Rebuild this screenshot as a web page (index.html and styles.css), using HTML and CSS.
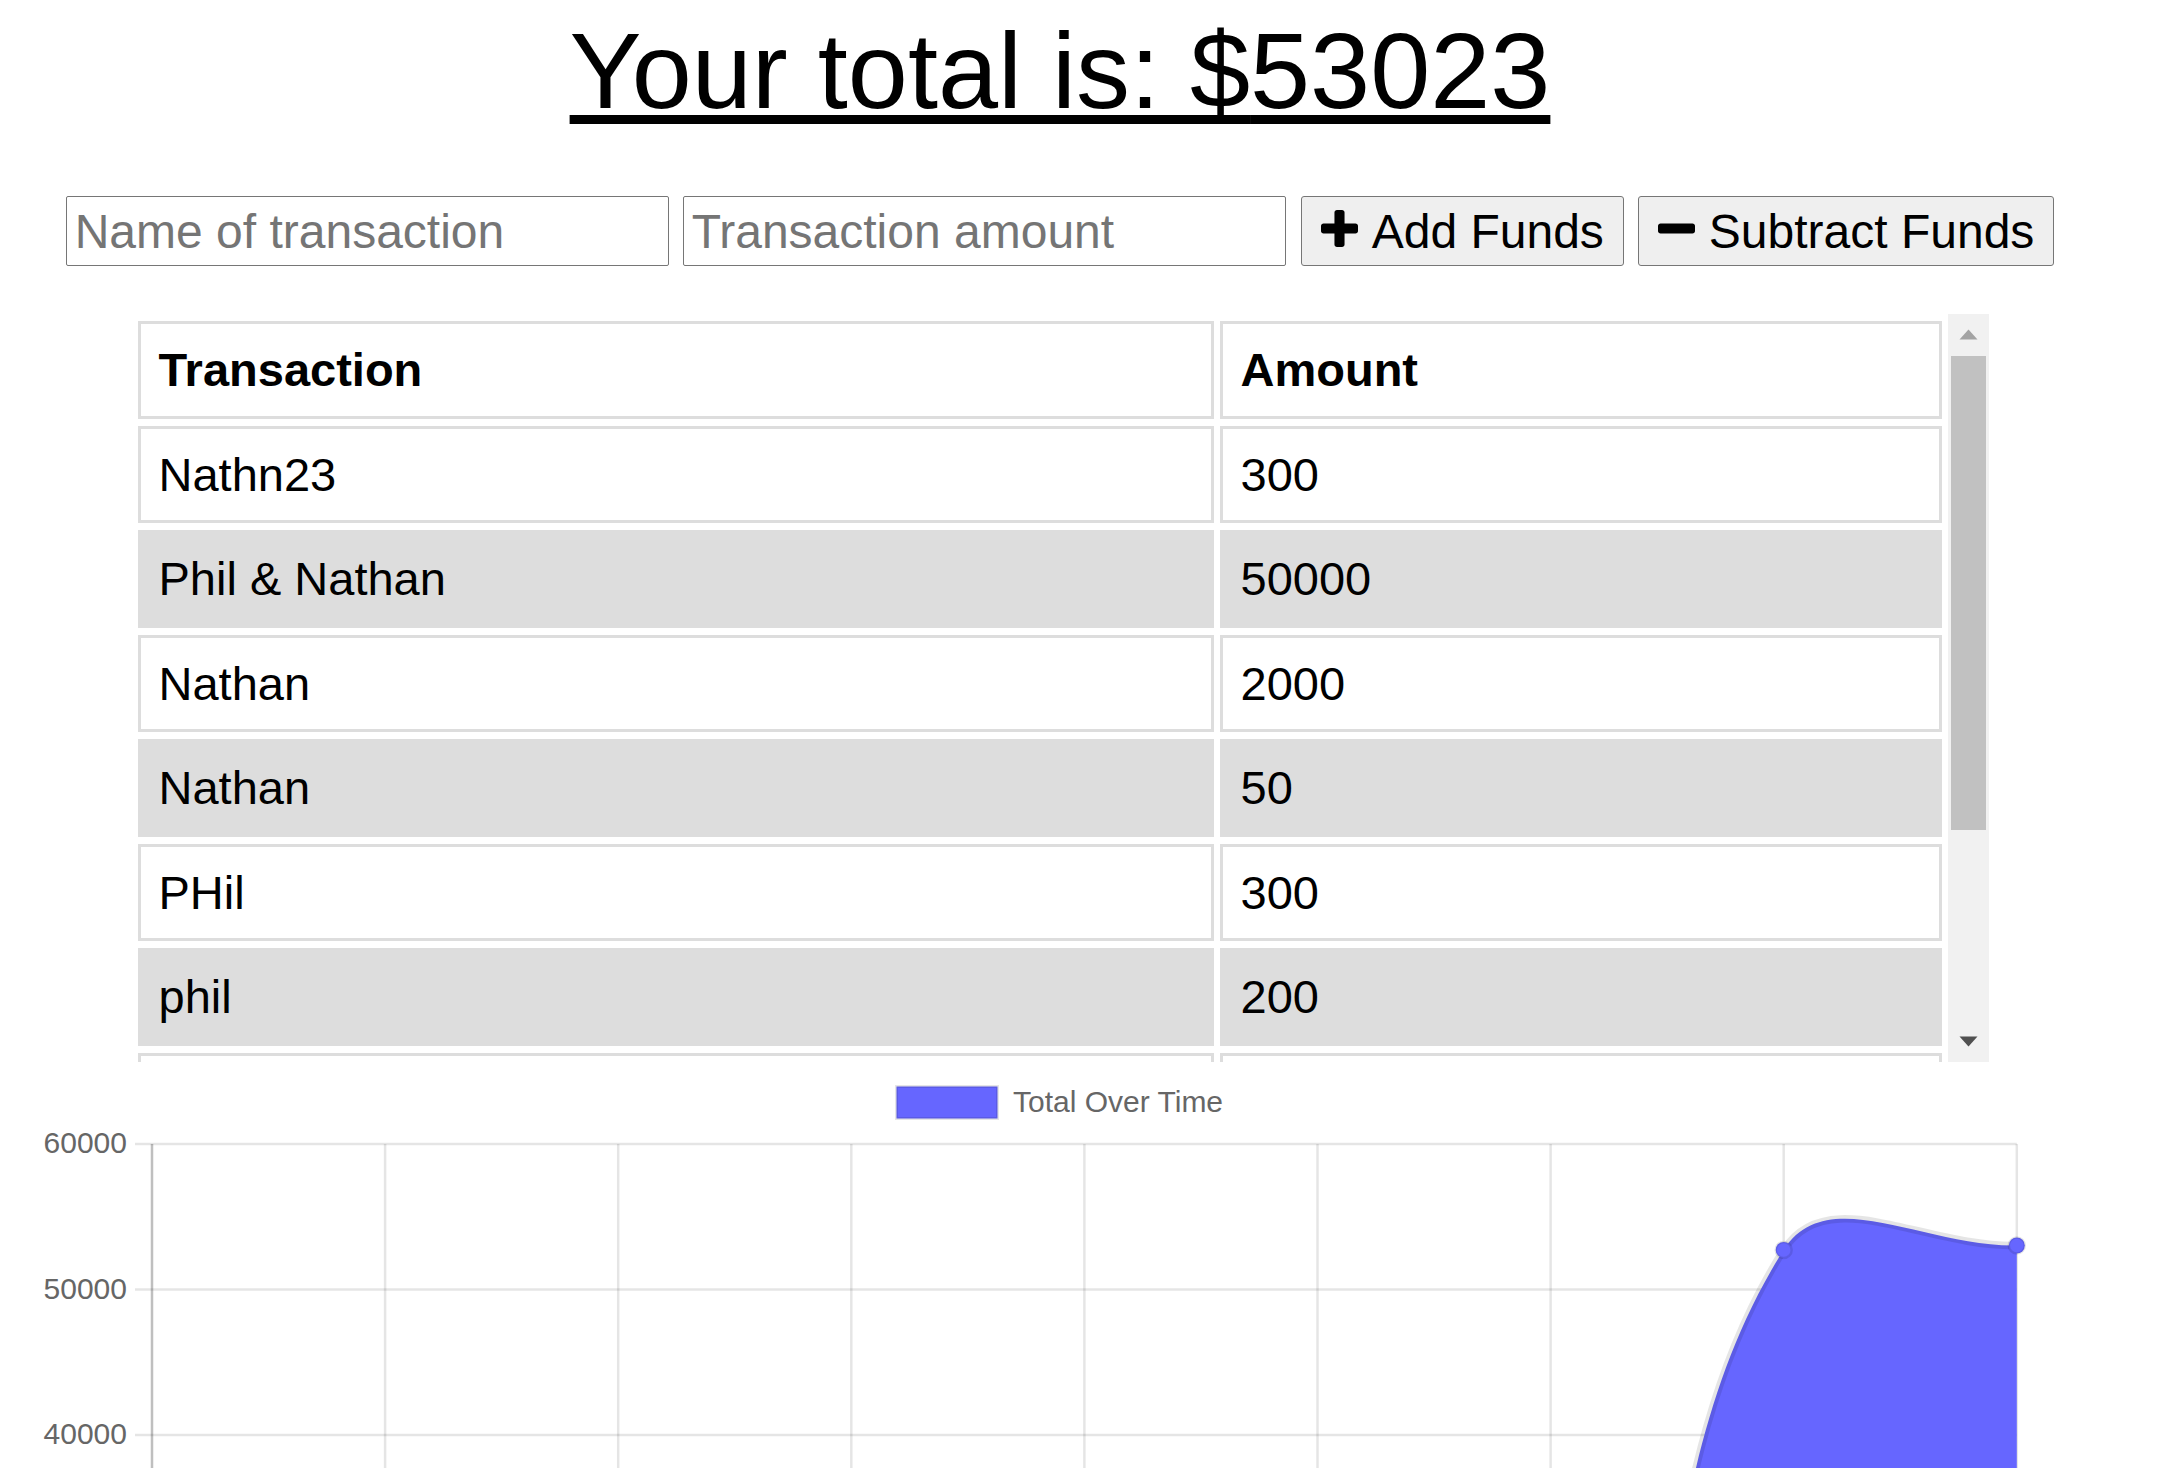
FILE: index.html
```html
<!DOCTYPE html>
<html lang="en">
<head>
<meta charset="utf-8">
<title>Budget Tracker</title>
<link rel="stylesheet" href="styles.css">
</head>
<body>
<main class="page">
  <h1 class="total">Your total is: $<span class="total-amount">53023</span></h1>

  <form class="entry">
    <input class="field" type="text" placeholder="Name of transaction">
    <input class="field" type="number" placeholder="Transaction amount">
    <button class="btn btn-add" type="button">
      <svg class="icon" viewBox="0 192 1408 1408" aria-hidden="true"><path d="M1408 800v192q0 40-28 68t-68 28h-416v416q0 40-28 68t-68 28h-192q-40 0-68-28t-28-68v-416h-416q-40 0-68-28t-28-68v-192q0-40 28-68t68-28h416v-416q0-40 28-68t68-28h192q40 0 68 28t28 68v416h416q40 0 68 28t28 68z"/></svg>Add Funds
    </button>
    <button class="btn btn-sub" type="button">
      <svg class="icon" viewBox="0 192 1408 1408" aria-hidden="true"><path d="M1408 800v192q0 40-28 68t-68 28h-1216q-40 0-68-28t-28-68v-192q0-40 28-68t68-28h1216q40 0 68 28t28 68z"/></svg>Subtract Funds
    </button>
  </form>

  <div class="table-box">
    <div class="table-view">
      <table class="tx-table">
        <colgroup><col class="col-name"><col class="col-amount"></colgroup>
        <thead>
          <tr><th>Transaction</th><th>Amount</th></tr>
        </thead>
        <tbody>
          <tr><td>Nathn23</td><td>300</td></tr>
          <tr><td>Phil &amp; Nathan</td><td>50000</td></tr>
          <tr><td>Nathan</td><td>2000</td></tr>
          <tr><td>Nathan</td><td>50</td></tr>
          <tr><td>PHil</td><td>300</td></tr>
          <tr><td>phil</td><td>200</td></tr>
          <tr><td>Phil</td><td>100</td></tr>
          <tr><td>Nathan</td><td>50</td></tr>
          <tr><td>test</td><td>23</td></tr>
        </tbody>
      </table>
    </div>
    <div class="scrollbar" aria-hidden="true">
      <div class="sb-btn">
        <svg viewBox="0 0 41 42"><polygon points="11.5,25.5 29.5,25.5 20.5,15.5" fill="#a3a3a3"/></svg>
      </div>
      <div class="sb-track"><div class="sb-thumb"></div></div>
      <div class="sb-btn">
        <svg viewBox="0 0 41 42"><polygon points="11.5,16.5 29.5,16.5 20.5,26.5" fill="#505050"/></svg>
      </div>
    </div>
  </div>

  <div class="chart">
    <svg class="chart-svg" viewBox="0 1062 2120 406" width="2120" height="406">
      <!-- legend -->
      <rect x="896.5" y="1086.5" width="101" height="32" fill="#6666ff" stroke="rgba(0,0,0,0.1)" stroke-width="3"/>
      <text class="legend-text" x="1013" y="1112">Total Over Time</text>

      <!-- y axis labels -->
      <text class="axis-text" x="127" y="1153" text-anchor="end">60000</text>
      <text class="axis-text" x="127" y="1299" text-anchor="end">50000</text>
      <text class="axis-text" x="127" y="1444" text-anchor="end">40000</text>

      <!-- horizontal grid -->
      <g stroke="rgba(0,0,0,0.1)" stroke-width="2.5">
        <line x1="135" y1="1144" x2="2016.8" y2="1144"/>
        <line x1="135" y1="1289.5" x2="2016.8" y2="1289.5"/>
        <line x1="135" y1="1435" x2="2016.8" y2="1435"/>
      </g>
      <!-- vertical grid -->
      <g stroke="rgba(0,0,0,0.1)" stroke-width="2.5">
        <line x1="385.1" y1="1144" x2="385.1" y2="1470"/>
        <line x1="618.2" y1="1144" x2="618.2" y2="1470"/>
        <line x1="851.3" y1="1144" x2="851.3" y2="1470"/>
        <line x1="1084.4" y1="1144" x2="1084.4" y2="1470"/>
        <line x1="1317.5" y1="1144" x2="1317.5" y2="1470"/>
        <line x1="1550.6" y1="1144" x2="1550.6" y2="1470"/>
        <line x1="1783.7" y1="1144" x2="1783.7" y2="1470"/>
        <line x1="2016.8" y1="1144" x2="2016.8" y2="1470"/>
      </g>
      <line x1="152" y1="1144" x2="152" y2="1470" stroke="rgba(0,0,0,0.25)" stroke-width="2.5"/>

      <!-- dataset -->
      <path d="M1550.6,1977.4 C1693.2,1745.9 1641,1474.4 1783.7,1249.9 C1827,1181.7 1923.6,1247.3 2016.8,1245.5 L2016.8,1600 L1550.6,1600 Z" fill="#6666ff"/>
      <path d="M1550.6,1977.4 C1693.2,1745.9 1641,1474.4 1783.7,1249.9 C1827,1181.7 1923.6,1247.3 2016.8,1245.5" fill="none" stroke="rgba(0,0,0,0.1)" stroke-width="7.5"/>
      <circle cx="1783.7" cy="1249.9" r="8" fill="#6666ff" stroke="rgba(0,0,0,0.1)" stroke-width="2.5"/>
      <circle cx="2016.8" cy="1245.5" r="8" fill="#6666ff" stroke="rgba(0,0,0,0.1)" stroke-width="2.5"/>
    </svg>
  </div>
</main>
</body>
</html>
```

FILE: styles.css
```css
html, body {
  margin: 0;
  padding: 0;
  background: #ffffff;
}

body {
  font-family: "Liberation Sans", Arial, sans-serif;
  color: #000000;
}

.page {
  width: 2120px;
}

.total {
  margin: 9px 0 0;
  font-size: 108px;
  line-height: 124px;
  font-weight: 400;
  text-align: center;
  text-decoration: underline;
  text-decoration-thickness: 9px;
  text-underline-offset: 7px;
}

.entry {
  display: flex;
  justify-content: center;
  gap: 14px;
  margin: 63px 0 0;
}

.field {
  box-sizing: border-box;
  width: 603px;
  height: 70px;
  margin: 0;
  padding: 0 8px;
  border: 1px solid #767676;
  border-radius: 2px;
  background: #ffffff;
  font-family: "Liberation Sans", Arial, sans-serif;
  font-size: 48px;
  color: #000000;
}

.field::placeholder {
  color: #757575;
}

.btn {
  box-sizing: border-box;
  display: flex;
  align-items: center;
  height: 70px;
  margin: 0;
  padding: 0 19px 0 19px;
  border: 1px solid #767676;
  border-radius: 3px;
  background: #efefef;
  font-family: "Liberation Sans", Arial, sans-serif;
  font-size: 48px;
  color: #000000;
  white-space: nowrap;
}

.btn-add {
  margin-left: 1px;
}

.icon {
  width: 37px;
  height: 37px;
  margin: 0 14px 5px 0;
  fill: currentColor;
  flex: none;
}

.table-box {
  display: flex;
  width: 1857px;
  height: 748px;
  margin: 48px auto 0;
}

.table-view {
  width: 1816px;
  height: 748px;
  overflow: hidden;
}

.tx-table {
  width: 1816px;
  table-layout: fixed;
  border-collapse: separate;
  border-spacing: 6px 7px;
  font-size: 47px;
}

.col-name {
  width: 1076px;
}

.tx-table th,
.tx-table td {
  padding: 18px 18px;
  line-height: 55.5px;
  border: 3px solid #dddddd;
  background: #ffffff;
  text-align: left;
  white-space: nowrap;
}

.tx-table th {
  font-weight: 700;
}

.tx-table tbody tr:nth-child(even) td {
  background: #dddddd;
}

.scrollbar {
  display: flex;
  flex-direction: column;
  width: 41px;
  height: 748px;
  background: #f1f1f1;
}

.sb-btn {
  height: 42px;
  flex: none;
}

.sb-btn svg {
  display: block;
  width: 41px;
  height: 42px;
}

.sb-track {
  flex: 1;
  padding: 0 3px;
}

.sb-thumb {
  height: 474px;
  background: #c1c1c1;
}

.chart {
  height: 406px;
}

.chart-svg {
  display: block;
  width: 2120px;
  height: 406px;
}

.legend-text,
.axis-text {
  font-family: "Liberation Sans", Arial, sans-serif;
  font-size: 30px;
  fill: #666666;
}
```
